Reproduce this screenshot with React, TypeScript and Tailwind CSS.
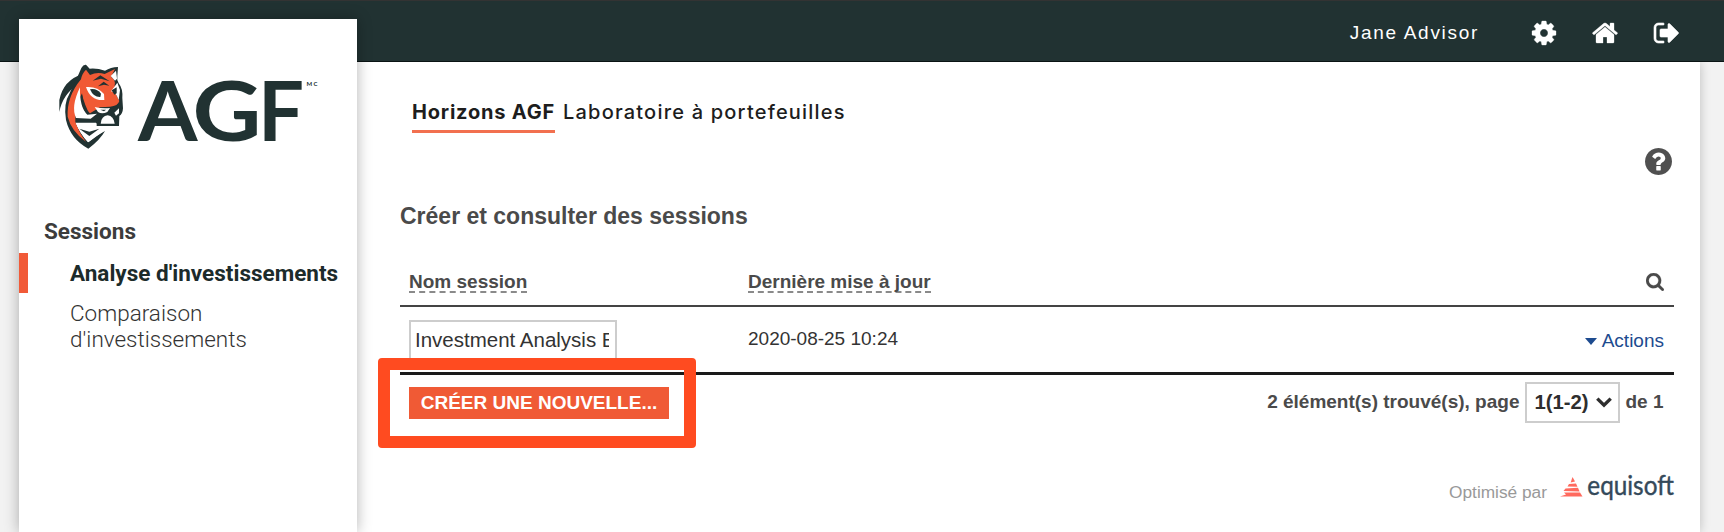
import React from 'react';

const COG =
  'M1152 896q0-106-75-181t-181-75-181 75-75 181 75 181 181 75 181-75 75-181zm512-109v222q0 12-8 23t-20 13l-185 28q-19 54-39 91 35 50 107 138 10 12 10 25t-9 23q-27 37-99 108t-94 71q-12 0-26-9l-138-108q-44 23-91 38-16 136-29 186-7 28-36 28h-222q-14 0-24.5-8.5t-11.5-21.5l-28-184q-49-16-90-37l-141 107q-10 9-25 9-14 0-25-11-126-114-165-168-7-10-7-23 0-12 8-23 15-21 51-66.5t54-70.5q-27-50-41-99l-183-27q-13-2-21-12.5t-8-23.5v-222q0-12 8-23t19-13l186-28q14-46 39-92-40-57-107-138-10-12-10-24 0-10 9-23 26-36 98.5-107.5t94.5-71.5q13 0 26 10l138 107q44-23 91-38 16-136 29-186 7-28 36-28h222q14 0 24.5 8.5t11.5 21.5l28 184q49 16 90 37l142-107q9-9 24-9 13 0 25 10 129 119 165 170 7 8 7 22 0 12-8 23-15 21-51 66.5t-54 70.5q26 50 41 98l183 28q13 2 21 12.5t8 23.5z';
const HOME =
  'M1472 992v480q0 26-19 45t-45 19h-384v-384h-256v384h-384q-26 0-45-19t-19-45v-480q0-1 .5-3t.5-3l575-474 575 474q1 2 1 6zm223-69l-62 74q-8 9-21 11h-3q-13 0-21-7l-692-577-692 577q-12 8-24 7-13-2-21-11l-62-74q-8-10-7-23.5t11-21.5l719-599q32-26 76-26t76 26l244 204v-195q0-14 9-23t23-9h192q14 0 23 9t9 23v408l219 182q10 8 11 21.5t-7 23.5z';
const SIGN_OUT =
  'M704 1440q0 4 1 20t.5 26.5-3 23.5-10 19.5-20.5 6.5h-320q-119 0-203.5-84.5t-84.5-203.5v-704q0-119 84.5-203.5t203.5-84.5h320q13 0 22.5 9.5t9.5 22.5q0 4 1 20t.5 26.5-3 23.5-10 19.5-20.5 6.5h-320q-66 0-113 47t-47 113v704q0 66 47 113t113 47h312l11.5 1 11.5 3 8 5.5 7 9 2 13.5zm928-544q0 26-19 45l-544 544q-19 19-45 19t-45-19-19-45v-288h-448q-26 0-45-19t-19-45v-384q0-26 19-45t45-19h448v-288q0-26 19-45t45-19 45 19l544 544q19 19 19 45z';
const SEARCH =
  'M1216 832q0-185-131.5-316.5t-316.5-131.5-316.5 131.5-131.5 316.5 131.5 316.5 316.5 131.5 316.5-131.5 131.5-316.5zm512 832q0 52-38 90t-90 38q-54 0-90-38l-343-342q-179 124-399 124-143 0-273.5-55.5t-225-150-150-225-55.5-273.5 55.5-273.5 150-225 225-150 273.5-55.5 273.5 55.5 225 150 150 225 55.5 273.5q0 220-124 399l343 343q37 37 37 90z';
const HELP =
  'M1024 1376v-192q0-14-9-23t-23-9h-192q-14 0-23 9t-9 23v192q0 14 9 23t23 9h192q14 0 23-9t9-23zm256-672q0-88-55.5-163t-138.5-116-170-41q-243 0-371 213-15 24 8 42l132 100q7 6 19 6 16 0 25-12 53-68 86-92 34-24 86-24 48 0 85.5 26t37.5 59q0 38-20 61t-68 45q-63 28-115.5 86.5t-52.5 125.5v36q0 14 9 23t23 9h192q14 0 23-9t9-23q0-19 21.5-49.5t54.5-49.5q32-18 49-28.5t46-35 44.5-48 28-60.5 12.5-81zm384 192q0 209-103 385.5t-279.5 279.5-385.5 103-385.5-103-279.5-279.5-103-385.5 103-385.5 279.5-279.5 385.5-103 385.5 103 279.5 279.5 103 385.5z';

function Icon({ path, box, className }: { path: string; box: string; className: string }) {
  return (
    <svg viewBox={box} className={className} fill="currentColor" stroke="currentColor" aria-hidden="true">
      <path d={path} />
    </svg>
  );
}

function Tiger() {
  return (
    <svg viewBox="174 186 204 264" className="h-[88px] w-[68px] shrink-0" aria-hidden="true">
      {/* mane streak and head silhouette */}
      <path fill="#213232" d="M248 222Q190 240 178 300L178 336Q188 282 236 252Z" />
      <path
        fill="#213232"
        d="M230 236L244 204Q250 193 258 194L269 206Q292 204 315 212Q332 202 354 201L352 228Q350 240 356 250Q369 266 367 294L369 325Q368 342 358 348L357 378L288 378L288 368L226 368Q240 400 264 427Q285 408 315 393Q300 420 265 446Q212 418 198 360Q190 310 208 282Q218 256 230 236Z"
      />
      {/* coat */}
      <path
        fill="#f15a35"
        d="M243 238Q246 220 258 209L270 225Q292 214 314 222L345 207L333 230Q348 242 344 256L346 280L358 303Q354 318 330 320L300 322L270 340Q252 330 246 280Q222 320 226 366Q238 400 258 425Q214 394 203 350Q200 290 243 238Z"
      />
      <path fill="#fff" d="M348 212L332 228L345 242L351 236Z" />
      {/* cheek */}
      <path fill="#fff" d="M240 262Q212 320 228 354L272 356L291 341L262 344Q238 322 240 262Z" />
      <path fill="#213232" d="M246 284Q242 325 264 342L268 340Q256 320 246 284Z" />
      {/* eyes */}
      <path fill="#fff" d="M258 261Q292 258 312 282L313 300Q272 304 258 261Z" />
      <path fill="#213232" d="M270 268Q290 264 303 281L301 291Q280 292 270 268Z" />
      <path fill="#fff" d="M333 274L345 258L352 248L360 270L356 300Q348 276 333 274Z" />
      <path fill="#213232" d="M335 271L350 262L350 280L343 284Z" />
      {/* forehead stripes */}
      <path fill="#213232" d="M278 242L301 226L329 244L303 236Z" />
      <path fill="#213232" d="M294 259L311 245L328 257L312 254Z" />
      {/* muzzle */}
      <path fill="#fff" d="M284 321Q305 326 330 324L322 336Q306 344 294 336Z" />
      <path fill="#213232" d="M301 329L318 329L312 334Z" />
      <path fill="#fff" d="M343 338L357 325L357 340L348 347Z" />
      <path fill="#fff" d="M302 371Q304 348 323 346Q341 348 344 371Z" />
      {/* throat */}
      <path fill="#fff" d="M228 370L290 370L290 380L312 392L265 427Q240 400 228 370Z" />
      <path fill="#213232" d="M238 386L268 395L298 386L268 408Z" />
    </svg>
  );
}

function AgfLogo() {
  return (
    <div className="flex h-[131px] items-start pt-[43px] pl-[39px]">
      <Tiger />
      <svg viewBox="0 -20 200 120" className="-mt-5 h-[120px] w-[200px]" fontFamily="Lato, sans-serif" fill="#213232">
        <g fontSize="83" fontWeight="700">
          <text x="12" y="79.4" textLength="59.5" lengthAdjust="spacingAndGlyphs">A</text>
          <text x="66.5" y="79.4" textLength="69" lengthAdjust="spacingAndGlyphs">G</text>
          <text x="132" y="79.4" textLength="46" lengthAdjust="spacingAndGlyphs">F</text>
        </g>
        <text x="180.5" y="23.8" fontSize="6" fontWeight="700" textLength="11">MC</text>
      </svg>
    </div>
  );
}

function Header() {
  return (
    <header className="flex h-[62px] items-center justify-end border-t border-b border-t-[#333] border-b-[#0a1414] bg-[#213232] pr-[43px] text-white">
      <span className="mr-[51px] pt-[3px] text-[19px] leading-6 tracking-[1.7px]">Jane Advisor</span>
      <nav className="flex gap-[33.5px] pt-[3px]">
        <Icon path={COG} box="0 0 1792 1792" className="size-7 stroke-[20]" />
        <Icon path={HOME} box="0 0 1792 1792" className="-ml-px mr-px size-7 stroke-[20]" />
        <Icon path={SIGN_OUT} box="0 0 1792 1792" className="size-7 stroke-[40]" />
      </nav>
    </header>
  );
}

function Sidebar() {
  return (
    <aside className="z-10 ml-[19px] h-[513px] w-[338px] shrink-0 bg-white font-[Roboto,sans-serif] text-[22.5px] shadow-[0_0_14px_rgba(0,0,0,0.3)]">
      <AgfLogo />
      <h2 className="mt-[66px] pl-[25px] leading-[30px] font-bold text-[#3c3c3c]">Sessions</h2>
      <ul className="mt-[7px]">
        <li className="h-10 border-l-[9px] border-[#f15a38] pl-[42px] leading-[41px] font-bold whitespace-nowrap text-[#1c2b2b]">
          Analyse d'investissements
        </li>
        <li className="pt-[7px] pl-[51px] leading-[26px] font-light text-[#333]">
          Comparaison
          <br />
          d'investissements
        </li>
      </ul>
    </aside>
  );
}

function Equisoft() {
  return (
    <svg viewBox="0 -8 116 46" className="-mt-2 -mr-px h-[46px] w-[116px]" aria-label="equisoft">
      <g fill="#ff6a5e">
        <path d="M13.5 5L16 9.5L11.7 10.5Z" />
        <path d="M10 12L17 11.5L18.5 14.8L8.5 14.5Z" />
        <path d="M6.5 16.4L19 15.8L20.6 19.6L4.5 19Z" />
        <path d="M5 20.6L21 20.6L23.5 24.4L1 24.4L7 22.6Z" />
      </g>
      <text x="28.3" y="23" fontFamily="Lato, sans-serif" fontSize="27" fontWeight="400" fill="#34495a" stroke="#34495a" strokeWidth="0.4" textLength="86.5" lengthAdjust="spacingAndGlyphs">
        equisoft
      </text>
    </svg>
  );
}

function ColumnTitle({ children }: { children: React.ReactNode }) {
  return <div className="w-fit border-b-2 border-dashed border-[#8a8a8a] leading-[19px]">{children}</div>;
}

function SessionsTable() {
  return (
    <section className="relative text-[19px] text-[#333]">
      <div className="flex h-12 border-b-2 border-[#444] pl-[9px] font-bold text-[#4a4a4a]">
        <div className="w-[339px] pt-[13px]">
          <ColumnTitle>Nom session</ColumnTitle>
        </div>
        <div className="flex-1 pt-[13px]">
          <ColumnTitle>Dernière mise à jour</ColumnTitle>
        </div>
        <Icon path={SEARCH} box="64 128 1664 1664" className="mt-[14px] mr-[10.5px] size-[18px] stroke-[20]" />
      </div>
      <div className="flex h-[68px] items-start border-b-[3px] border-[#1a1a1a] pl-[9px]">
        <div className="mt-[13px] mr-[131px] h-[42px] w-[208px] border-2 border-[#cdcdcd] pr-[6px] pl-1 text-[20.5px] leading-[35px]">
          <div className="overflow-hidden whitespace-nowrap">Investment Analysis Example</div>
        </div>
        <span className="flex-1 pt-[20px] leading-[24px]">2020-08-25 10:24</span>
        <a className="mt-[22px] mr-[10px] flex items-center gap-[5px] leading-6 text-[#1d4b8f]">
          <svg viewBox="0 0 12 7" className="h-[7px] w-3" fill="currentColor">
            <path d="M0 0H12L6 7Z" />
          </svg>
          Actions
        </a>
      </div>
      <div className="flex justify-between pl-[9px]">
        <button className="mt-[12px] h-[32px] w-[260px] bg-[#f05a35] font-bold text-white">CRÉER UNE NOUVELLE...</button>
        <div className="flex pt-[7px] pr-[10.5px] font-bold leading-[39px] text-[#4a4a4a]">
          <span>2 élément(s) trouvé(s), page</span>
          <span className="mr-[5.5px] ml-[5.5px] flex h-[41px] w-[95px] items-center gap-[7px] border-2 border-[#cdcdcd] pl-[7.5px] text-[20.3px] text-[#2e2e2e]">
            1(1-2)
            <svg viewBox="0 0 16 11" className="h-[11px] w-4 fill-none stroke-current stroke-[3.4]">
              <path d="M1.3 1.6L8 8.2L14.7 1.6" />
            </svg>
          </span>
          <span>de 1</span>
        </div>
      </div>
      <div className="absolute top-[99px] -left-[22px] h-[90px] w-[318px] rounded-[4px] border-12 border-[#ff4b20]" />
    </section>
  );
}

export default function App() {
  return (
    <div className="h-[532px] w-[1724px] overflow-hidden bg-[#f2f2f2] font-['Liberation_Sans',Arial,sans-serif]">
      <Header />
      <div className="-mt-[43px] flex">
        <Sidebar />
        <main className="mt-[43px] mr-6 h-[470px] flex-1 bg-white pr-[26px] pl-[43px] shadow-[0_0_10px_rgba(0,0,0,0.22)] [clip-path:inset(0_-24px_0_0)]">
          <div className="flex pt-[35px] pl-[12px] font-[Inter,sans-serif] text-[20px] leading-[30px] whitespace-nowrap text-[#1d1d1d]">
            <span className="h-[36px] w-[143px] border-b-3 border-[#f2704f] font-bold tracking-[0.8px]">Horizons AGF</span>
            <span className="ml-[8px] font-medium tracking-[1.2px]">Laboratoire à portefeuilles</span>
          </div>
          <div className="flex justify-end pt-[15px] pr-[2px] text-[#505050]">
            <Icon path={HELP} box="128 128 1536 1536" className="size-[27px] stroke-none" />
          </div>
          <h1 className="mt-[27px] text-[23px] leading-[28px] font-bold text-[#4a4a4a]">Créer et consulter des sessions</h1>
          <div className="mt-[29px]">
            <SessionsTable />
          </div>
          <footer className="mt-[49px] flex justify-end">
            <span className="mt-[8px] mr-[12px] text-[17.3px] leading-6 text-[#999]">Optimisé par</span>
            <Equisoft />
          </footer>
        </main>
      </div>
    </div>
  );
}
